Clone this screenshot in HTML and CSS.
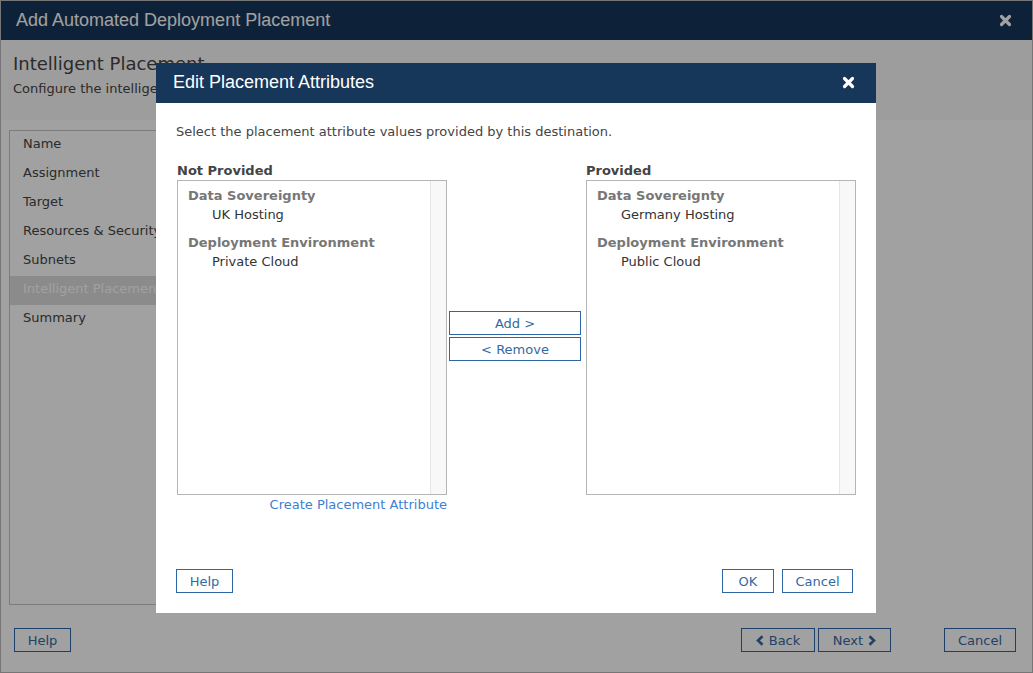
FILE: index.html
```html
<!DOCTYPE html>
<html lang="en">
<head>
<meta charset="utf-8">
<title>Add Automated Deployment Placement</title>
<link rel="stylesheet" href="styles.css">
</head>
<body>
<div class="window">
  <div class="titlebar">
    <span>Add Automated Deployment Placement</span>
    <svg class="close" width="13" height="13" viewBox="0 0 13 13"><path d="M2.5 2.5 L10.5 10.5 M10.5 2.5 L2.5 10.5" /></svg>
  </div>
  <div class="pagehead">
    <h1>Intelligent Placement</h1>
    <p>Configure the intelligent placement attributes.</p>
  </div>
  <div class="main">
    <ul class="steps">
      <li>Name</li>
      <li>Assignment</li>
      <li>Target</li>
      <li>Resources &amp; Security</li>
      <li>Subnets</li>
      <li class="active">Intelligent Placement</li>
      <li>Summary</li>
    </ul>
    <div class="content"></div>
  </div>
  <div class="footer">
    <button class="btn btn-help">Help</button>
    <button class="btn btn-back"><svg class="chev" width="8" height="11" viewBox="0 0 8 11"><path d="M6.5 1.2 L2 5.5 L6.5 9.8" /></svg>Back</button>
    <button class="btn btn-next">Next<svg class="chev" width="8" height="11" viewBox="0 0 8 11"><path d="M1.5 1.2 L6 5.5 L1.5 9.8" /></svg></button>
    <button class="btn btn-cancel">Cancel</button>
  </div>
</div>

<div class="overlay"></div>

<div class="modal">
  <div class="modal-head">
    <span>Edit Placement Attributes</span>
    <svg class="close" width="13" height="13" viewBox="0 0 13 13"><path d="M2.5 2.5 L10.5 10.5 M10.5 2.5 L2.5 10.5" /></svg>
  </div>
  <div class="modal-body">
    <p class="intro">Select the placement attribute values provided by this destination.</p>
    <div class="columns">
      <div class="col col-left">
        <div class="col-label">Not Provided</div>
        <div class="listbox">
          <div class="list-items">
            <div class="group">
              <div class="group-name">Data Sovereignty</div>
              <div class="item">UK Hosting</div>
            </div>
            <div class="group">
              <div class="group-name">Deployment Environment</div>
              <div class="item">Private Cloud</div>
            </div>
          </div>
          <div class="track"></div>
        </div>
        <div class="create-link">Create Placement Attribute</div>
      </div>
      <div class="col col-mid">
        <button class="btn btn-move">Add &gt;</button>
        <button class="btn btn-move">&lt; Remove</button>
      </div>
      <div class="col col-right">
        <div class="col-label">Provided</div>
        <div class="listbox">
          <div class="list-items">
            <div class="group">
              <div class="group-name">Data Sovereignty</div>
              <div class="item">Germany Hosting</div>
            </div>
            <div class="group">
              <div class="group-name">Deployment Environment</div>
              <div class="item">Public Cloud</div>
            </div>
          </div>
          <div class="track"></div>
        </div>
      </div>
    </div>
    <div class="modal-foot">
      <button class="btn btn-mhelp">Help</button>
      <button class="btn btn-ok">OK</button>
      <button class="btn btn-mcancel">Cancel</button>
    </div>
  </div>
</div>
</body>
</html>
```

FILE: styles.css
```css
* { box-sizing: border-box; }
html, body { margin: 0; padding: 0; }
body {
  width: 1033px;
  height: 673px;
  overflow: hidden;
  position: relative;
  background: #fff;
  font-family: "DejaVu Sans", Verdana, sans-serif;
  font-size: 13px;
  color: #444;
}

.window {
  width: 1033px;
  height: 673px;
  border: 1px solid #bbb;
  display: flex;
  flex-direction: column;
  background: #fff;
}

.titlebar {
  flex: none;
  height: 39px;
  background: #163759;
  color: #fff;
  display: flex;
  align-items: center;
  justify-content: space-between;
  padding: 0 20px 1px 15px;
  font-family: "Liberation Sans", Arial, sans-serif;
  font-size: 18px;
}

.close path {
  stroke: #fff;
  stroke-width: 3.2;
  stroke-linecap: round;
  fill: none;
}

.pagehead {
  flex: none;
  height: 80px;
  background: #f9f9f9;
  padding: 13px 12px 0;
}
.pagehead h1 {
  margin: 0;
  font-size: 18px;
  font-weight: normal;
  line-height: 22px;
  color: #444;
}
.pagehead p {
  margin: 6px 0 0;
  line-height: 16px;
  white-space: nowrap;
}

.main {
  flex: none;
  height: 485px;
  display: flex;
  padding: 10px 0 0 8px;
}
.steps {
  list-style: none;
  margin: 0;
  padding: 0;
  width: 230px;
  height: 475px;
  border: 1px solid #c4c4c4;
}
.steps li {
  height: 29px;
  padding: 4px 12px 0 13px;
  line-height: 18px;
  white-space: nowrap;
  overflow: hidden;
}
.steps li.active {
  background: #dcdcdc;
  color: #fff;
}

.btn {
  height: 24px;
  padding: 1px 0 0;
  margin: 0;
  background: #fff;
  border: 1px solid #2d66a6;
  color: #3468a5;
  font-family: "DejaVu Sans", Verdana, sans-serif;
  font-size: 13px;
  line-height: 22px;
  display: inline-flex;
  align-items: center;
  justify-content: center;
  gap: 5px;
}
.chev path {
  stroke: currentColor;
  stroke-width: 2.6;
  fill: none;
  stroke-linejoin: miter;
}

.footer {
  flex: none;
  display: flex;
  padding: 23px 16px 0 13px;
}
.btn-help { width: 57px; }
.btn-back { width: 74px; margin-left: auto; }
.btn-next { width: 73px; margin-left: 3px; }
.btn-cancel { width: 72px; margin-left: 53px; }

.overlay {
  position: absolute;
  inset: 0;
  background: rgba(0, 0, 0, 0.37);
}

.modal {
  position: absolute;
  left: 156px;
  top: 63px;
  width: 720px;
  height: 550px;
  background: #fff;
  display: flex;
  flex-direction: column;
}
.modal-head {
  flex: none;
  height: 40px;
  background: #163759;
  color: #fff;
  display: flex;
  align-items: center;
  justify-content: space-between;
  padding: 0 21px 2px 17px;
  font-family: "Liberation Sans", Arial, sans-serif;
  font-size: 18px;
}
.modal-body {
  flex: 1;
  display: flex;
  flex-direction: column;
  padding: 21px 20px 20px;
}
.intro {
  margin: 0;
  line-height: 16px;
  color: #444;
}
.columns {
  display: grid;
  grid-template-columns: 271px 139px 270px;
  margin-top: 22px;
}
.col-label {
  font-weight: bold;
  line-height: 16px;
  padding-top: 1px;
  margin-bottom: 1px;
  color: #444;
}
.col-left .col-label { padding-left: 1px; }
.listbox {
  width: 270px;
  height: 315px;
  border: 1px solid #b5b5b5;
  display: flex;
}
.col-left .listbox { margin-left: 1px; }
.list-items {
  flex: 1;
  padding: 5px 0 0 10px;
}
.group { margin-bottom: 9px; }
.group-name {
  font-weight: bold;
  color: #777;
  line-height: 19px;
}
.item {
  padding-left: 24px;
  line-height: 19px;
  color: #333;
}
.track {
  width: 16px;
  background: #f8f8f8;
  border-left: 1px solid #e6e6e6;
}
.create-link {
  margin-top: 2px;
  line-height: 16px;
  text-align: right;
  color: #3d80d3;
}
.col-mid {
  display: flex;
  flex-direction: column;
  gap: 2px;
  padding: 149px 0 0 2px;
}
.btn-move { width: 132px; }

.modal-foot {
  margin-top: auto;
  display: flex;
}
.btn-mhelp { width: 57px; }
.btn-ok { width: 52px; margin-left: auto; }
.btn-mcancel { width: 71px; margin-left: 8px; margin-right: 3px; }
```
